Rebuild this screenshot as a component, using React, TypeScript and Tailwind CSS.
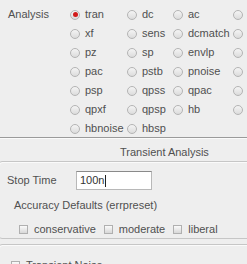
import React from "react";

const font = { fontFamily: '"Liberation Sans", Arial, sans-serif' };

function Radio({ label, checked = false }: { label: string; checked?: boolean }) {
  return (
    <div className="flex items-center h-[19px]">
      <span className="relative w-[10px] h-[10px] rounded-full border border-[#b4b4b4] bg-gradient-to-b from-[#f4f4f4] to-[#dcdcdc] shrink-0 flex items-center justify-center">
        {checked && <span className="w-[5px] h-[5px] rounded-full bg-[#d11a1a]" />}
      </span>
      <span className="ml-[5px] text-[11px] text-[#505050] whitespace-nowrap">{label}</span>
    </div>
  );
}

function Check({ label }: { label: string }) {
  return (
    <div className="flex items-center">
      <span className="w-[9px] h-[9px] border border-[#b0b0b0] bg-gradient-to-b from-[#fafafa] to-[#d8d8d8] shrink-0" />
      <span className="ml-[6px] text-[11px] text-[#505050] whitespace-nowrap">{label}</span>
    </div>
  );
}

const cols: string[][] = [
  ["tran", "xf", "pz", "pac", "psp", "qpxf", "hbnoise"],
  ["dc", "sens", "sp", "pstb", "qpss", "qpsp", "hbsp"],
  ["ac", "dcmatch", "envlp", "pnoise", "qpac", "hb"],
  ["", "", "", "", "", ""],
];

export default function App() {
  return (
    <div className="w-[247px] h-[264px] overflow-hidden bg-[#eeeeee]" style={font}>
      <div className="flex pt-[5px] h-[137px]">
        <div className="w-[70px] shrink-0 pl-[8px] h-[19px] flex items-center text-[11px] text-[#505050]">Analysis</div>
        <div className="grid grid-cols-[57px_46px_60px_40px] shrink-0">
          {cols.map((c, i) => (
            <div key={i} className="flex flex-col">
              {c.map((l, j) => (
                <Radio key={j} label={l} checked={i === 0 && j === 0} />
              ))}
            </div>
          ))}
        </div>
      </div>
      <div className="h-[1px] bg-[#9a9a9a]" />
      <div className="h-[1px] bg-[#fafafa]" />
      <div className="h-[22px] pt-[4px] flex items-center pl-[120px] text-[11px] text-[#505050] whitespace-nowrap">Transient Analysis</div>
      <div className="ml-[-2px] mr-[-10px] h-[78px] border border-[#c6c6c6] rounded-[4px] shadow-[inset_1px_1px_0_#fafafa]">
        <div className="flex items-center mt-[9px]">
          <div className="w-[77px] shrink-0 pl-[8px] text-[11px] text-[#505050]">Stop Time</div>
          <div className="w-[76px] h-[19px] bg-white border border-[#b8b8b8] border-t-[#8a8a8a] flex items-center pl-[3px] text-[11px] text-[#333]">
            100n<span className="w-[1px] h-[12px] bg-[#222] ml-[1px]" />
          </div>
        </div>
        <div className="mt-[8px] pl-[15px] text-[11px] text-[#505050] h-[14px] flex items-center">Accuracy Defaults (errpreset)</div>
        <div className="flex items-center mt-[9px] pl-[20px] gap-[8px]">
          <Check label="conservative" />
          <Check label="moderate" />
          <Check label="liberal" />
        </div>
      </div>
      <div className="ml-[-2px] mr-[-10px] mt-[5px] h-[40px] border border-[#c6c6c6] rounded-[4px] shadow-[inset_1px_1px_0_#fafafa]">
        <div className="pl-[12px] mt-[12px]">
          <Check label="Transient Noise" />
        </div>
      </div>
    </div>
  );
}
